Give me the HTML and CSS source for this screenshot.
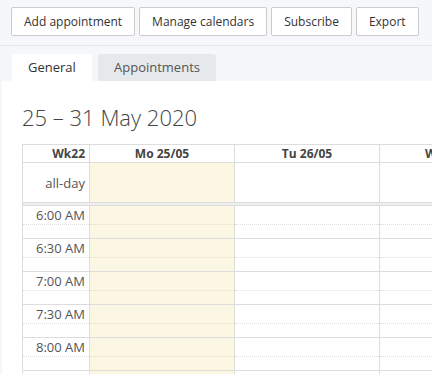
FILE: index.html
```html
<!DOCTYPE html>
<html lang="en">

<head>
    <meta charset="UTF-8">
    <title>Calendar</title>
    <link rel="stylesheet" href="styles.css">
</head>

<body>
    <div class="toolbar">
        <button class="btn">Add appointment</button>
        <button class="btn">Manage calendars</button>
        <button class="btn">Subscribe</button>
        <button class="btn">Export</button>
    </div>
    <div class="tabs">
        <span class="tab active">General</span>
        <span class="tab">Appointments</span>
    </div>
    <div class="panel">
        <h2 class="title">25 – 31 May 2020</h2>
        <table class="cal">
            <colgroup>
                <col class="axis-col">
                <col class="day-col"><col class="day-col"><col class="day-col"><col class="day-col">
                <col class="day-col"><col class="day-col"><col class="day-col">
            </colgroup>
            <thead>
                <tr>
                    <th class="axis">Wk22</th>
                    <th>Mo 25/05</th>
                    <th>Tu 26/05</th>
                    <th>We 27/05</th>
                    <th>Th 28/05</th>
                    <th>Fr 29/05</th>
                    <th>Sa 30/05</th>
                    <th>Su 31/05</th>
                </tr>
            </thead>
            <tbody>
                <tr class="allday">
                    <td class="axis">all-day</td>
                    <td class="today"></td><td></td><td></td><td></td><td></td><td></td><td></td>
                </tr>
                <tr class="divider"><td colspan="8"></td></tr>
                <tr class="major first">
                    <td class="axis">6:00 AM</td>
                    <td class="today"></td><td></td><td></td><td></td><td></td><td></td><td></td>
                </tr>
                <tr class="minor">
                    <td class="axis"></td>
                    <td class="today"></td><td></td><td></td><td></td><td></td><td></td><td></td>
                </tr>
                <tr class="major">
                    <td class="axis">6:30 AM</td>
                    <td class="today"></td><td></td><td></td><td></td><td></td><td></td><td></td>
                </tr>
                <tr class="minor">
                    <td class="axis"></td>
                    <td class="today"></td><td></td><td></td><td></td><td></td><td></td><td></td>
                </tr>
                <tr class="major">
                    <td class="axis">7:00 AM</td>
                    <td class="today"></td><td></td><td></td><td></td><td></td><td></td><td></td>
                </tr>
                <tr class="minor">
                    <td class="axis"></td>
                    <td class="today"></td><td></td><td></td><td></td><td></td><td></td><td></td>
                </tr>
                <tr class="major">
                    <td class="axis">7:30 AM</td>
                    <td class="today"></td><td></td><td></td><td></td><td></td><td></td><td></td>
                </tr>
                <tr class="minor">
                    <td class="axis"></td>
                    <td class="today"></td><td></td><td></td><td></td><td></td><td></td><td></td>
                </tr>
                <tr class="major">
                    <td class="axis">8:00 AM</td>
                    <td class="today"></td><td></td><td></td><td></td><td></td><td></td><td></td>
                </tr>
                <tr class="minor">
                    <td class="axis"></td>
                    <td class="today"></td><td></td><td></td><td></td><td></td><td></td><td></td>
                </tr>
                <tr class="major">
                    <td class="axis">8:30 AM</td>
                    <td class="today"></td><td></td><td></td><td></td><td></td><td></td><td></td>
                </tr>
            </tbody>
        </table>
    </div>
</body>

</html>
```

FILE: styles.css
```css
html,
body {
    overflow: hidden;
}

body {
    margin: 0;
    background: #f5f7fa;
    font-family: "Open Sans", "Noto Sans", sans-serif;
    font-size: 13px;
    color: #333;
}

.toolbar {
    display: flex;
    gap: 4px;
    padding: 7px 11px 9px;
    border-bottom: 1px solid #e3e6ea;
}

.btn {
    flex-shrink: 0;
    height: 29px;
    padding: 0 12px;
    font-family: inherit;
    font-size: 12px;
    color: #333;
    white-space: nowrap;
    background: #fff;
    border: 1px solid #ccc;
    border-radius: 2px;
}

.tabs {
    display: flex;
    gap: 6px;
    padding: 8px 0 0 12px;
}

.tab {
    padding: 0 16px;
    line-height: 27px;
    color: #555;
    background: #e6e9ec;
    border-radius: 3px 3px 0 0;
}

.tab.active {
    width: 48px;
    color: #333;
    background: #fff;
}

.panel {
    margin-left: 2px;
    padding: 1px 0 0 20px;
    background: #fff;
}

.title {
    margin: 19px 0 11px;
    font-size: 22px;
    font-weight: 300;
    color: #444;
    line-height: 32px;
    white-space: nowrap;
}

.cal {
    table-layout: fixed;
    width: 1082px;
    border-collapse: collapse;
}

.axis-col {
    width: 67px;
}

.day-col {
    width: 145px;
}

.cal th,
.cal td {
    padding: 0;
    border: 1px solid #ddd;
}

.cal th {
    height: 17px;
    font-size: 12px;
    font-weight: bold;
    color: #444;
    text-align: center;
    line-height: 17px;
}

.cal .axis {
    padding-right: 4px;
    text-align: right;
    color: #555;
    white-space: nowrap;
}

.cal th.axis {
    color: #444;
}

.cal .today {
    background: #fcf7e3;
}

.allday td {
    height: 39px;
}

.divider td {
    height: 2px;
    background: #eee;
}

.major td {
    height: 18px;
    line-height: 18px;
    border-bottom: 1px dotted #ddd;
}

.minor td {
    height: 13px;
    border-top: 1px dotted #ddd;
}
```
